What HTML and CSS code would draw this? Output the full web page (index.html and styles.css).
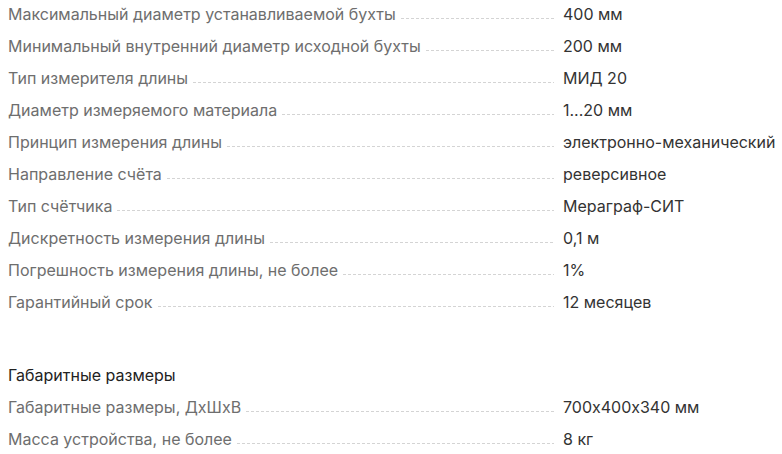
FILE: index.html
```html
<!DOCTYPE html>
<html lang="ru">
<head>
<meta charset="utf-8">
<link rel="stylesheet" href="styles.css">
</head>
<body>
<div class="specs">
  <div class="group">
    <div class="row"><div class="name"><span class="label">Максимальный диаметр устанавливаемой бухты</span><span class="dots"></span></div><div class="value">400 мм</div></div>
    <div class="row"><div class="name"><span class="label">Минимальный внутренний диаметр исходной бухты</span><span class="dots"></span></div><div class="value">200 мм</div></div>
    <div class="row"><div class="name"><span class="label">Тип измерителя длины</span><span class="dots"></span></div><div class="value">МИД 20</div></div>
    <div class="row"><div class="name"><span class="label">Диаметр измеряемого материала</span><span class="dots"></span></div><div class="value">1...20 мм</div></div>
    <div class="row"><div class="name"><span class="label">Принцип измерения длины</span><span class="dots"></span></div><div class="value">электронно-механический</div></div>
    <div class="row"><div class="name"><span class="label">Направление счёта</span><span class="dots"></span></div><div class="value">реверсивное</div></div>
    <div class="row"><div class="name"><span class="label">Тип счётчика</span><span class="dots"></span></div><div class="value">Мераграф-СИТ</div></div>
    <div class="row"><div class="name"><span class="label">Дискретность измерения длины</span><span class="dots"></span></div><div class="value">0,1 м</div></div>
    <div class="row"><div class="name"><span class="label">Погрешность измерения длины, не более</span><span class="dots"></span></div><div class="value">1%</div></div>
    <div class="row"><div class="name"><span class="label">Гарантийный срок</span><span class="dots"></span></div><div class="value">12 месяцев</div></div>
  </div>
  <div class="group">
    <div class="heading">Габаритные размеры</div>
    <div class="row"><div class="name"><span class="label">Габаритные размеры, ДхШхВ</span><span class="dots"></span></div><div class="value">700x400x340 мм</div></div>
    <div class="row"><div class="name"><span class="label">Масса устройства, не более</span><span class="dots"></span></div><div class="value">8 кг</div></div>
  </div>
</div>
</body>
</html>
```
FILE: styles.css
```css
html, body {
  margin: 0;
  padding: 0;
  background: #fff;
}
body {
  font-family: Inter, "Noto Sans", sans-serif;
  font-size: 16px;
  line-height: 24px;
  font-feature-settings: "calt" 0;
}
.specs {
  padding: 2px 8px 0 8px;
  display: flex;
  flex-direction: column;
  gap: 49px;
}
.group {
  display: flex;
  flex-direction: column;
  gap: 8px;
}
.heading {
  color: #222;
}
.row {
  display: grid;
  grid-template-columns: 546px 1fr;
  column-gap: 9px;
}
.name {
  display: flex;
  align-items: flex-start;
  min-width: 0;
}
.label {
  color: #6e6e6e;
  white-space: nowrap;
}
.dots {
  flex: 1;
  height: 17px;
  margin-left: 5px;
  background-image: repeating-linear-gradient(90deg, #d4d4d4 0 3px, transparent 3px 5px);
  background-size: 100% 1px;
  background-repeat: no-repeat;
  background-position: left bottom;
}
.value {
  color: #333;
  white-space: nowrap;
}
```
